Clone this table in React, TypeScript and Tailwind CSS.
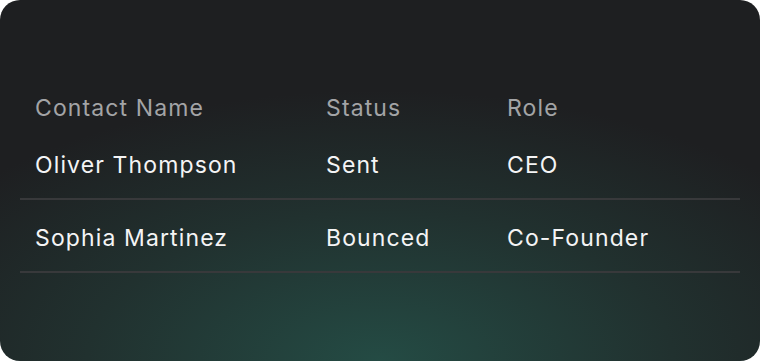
const rows = [
  { name: "Oliver Thompson", status: "Sent", role: "CEO" },
  { name: "Sophia Martinez", status: "Bounced", role: "Co-Founder" },
];

export default function App() {
  return (
    <div className="w-[760px] h-[361px] bg-white">
      <div
        className="w-full h-full rounded-[20px] overflow-hidden px-5 pt-[89px] bg-[radial-gradient(ellipse_70%_75%_at_50%_100%,#244b44_0%,#21312f_55%,#1e1f21_100%)] font-['Inter',sans-serif] tracking-[0.07em]"
      >
        {/* header */}
        <div className="grid grid-cols-[291px_181px_1fr] px-[15px] text-[23px] leading-[38px] text-[#a3a4a6]">
          <span>Contact Name</span>
          <span>Status</span>
          <span>Role</span>
        </div>
        {rows.map((r) => (
          <div
            key={r.name}
            className="grid grid-cols-[291px_181px_1fr] items-center px-[15px] h-[73px] pt-[6px] border-b-2 border-[#38393b] text-[23px] text-[#f4f4f5]"
          >
            <span>{r.name}</span>
            <span>{r.status}</span>
            <span>{r.role}</span>
          </div>
        ))}
      </div>
    </div>
  );
}
